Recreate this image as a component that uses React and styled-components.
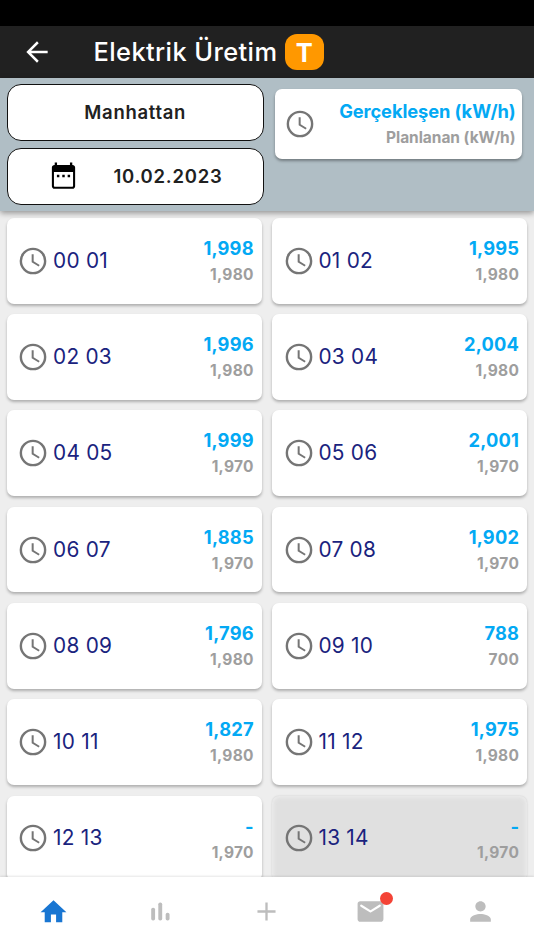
import React from "react";
import styled, { createGlobalStyle } from "styled-components";

const GlobalStyle = createGlobalStyle`
    * {
        box-sizing: border-box;
    }
    body {
        margin: 0;
        overflow: hidden;
        font-family: Inter, Roboto, "Liberation Sans", sans-serif;
    }
`
const Screen = styled.div`
    width: 534px;
    height: 950px;
    display: flex;
    flex-direction: column;
    background: #eeeeee;
    overflow: hidden;
`
const StatusBar = styled.div`
    flex: 0 0 26px;
    background: #000;
`
const AppBar = styled.header`
    flex: 0 0 52px;
    display: flex;
    align-items: center;
    padding-left: 20.5px;
    background: #212121;
`
const Title = styled.h1`
    margin: 0 0 0 41px;
    width: 191.3px;
    font-size: 25.4px;
    font-weight: 500;
    line-height: 30px;
    letter-spacing: 0.42px;
    color: #fff;
    white-space: nowrap;
`
const Tag = styled.span`
    width: 39px;
    height: 36.5px;
    border-radius: 12px;
    display: flex;
    align-items: center;
    justify-content: center;
    background: #ff9800;
    color: #fff;
    font-size: 25.5px;
    font-weight: 700;
`
const Filters = styled.section`
    position: relative;
    z-index: 1;
    flex: 0 0 133px;
    display: flex;
    align-items: flex-start;
    padding: 6px 12px 0 6.5px;
    background: #b0bec5;
    box-shadow: 0 2px 6px rgba(0, 0, 0, 0.4);
`
const FilterButtons = styled.div`
    width: 257.5px;
    display: flex;
    flex-direction: column;
    gap: 6.5px;
`
const FilterButton = styled.button`
    height: 57.3px;
    padding: 0 0 1px;
    display: flex;
    align-items: center;
    justify-content: center;
    gap: 34.5px;
    border: 1.4px solid #111;
    border-radius: 14px;
    background: #fff;
    color: #212121;
    font-family: inherit;
    font-size: 18.5px;
    font-weight: 600;
    letter-spacing: ${(props) => props.$spacing};
`
const Legend = styled.div`
    flex: 1;
    height: 70px;
    margin: 5.3px 0 0 11.3px;
    padding: 0 6.5px 0 9px;
    display: flex;
    align-items: center;
    justify-content: space-between;
    border-radius: 7px;
    background: #fff;
    box-shadow: 0 2px 3px rgba(0, 0, 0, 0.35);
`
const Values = styled.div`
    display: flex;
    flex-direction: column;
    align-items: flex-end;
    padding-top: 1.2px;
    white-space: nowrap;
`
const Actual = styled.span`
    font-size: 18.3px;
    line-height: 27px;
    font-weight: ${(props) => props.$weight || 700};
    letter-spacing: ${(props) => props.$spacing || "0.2px"};
    color: #03a9f4;
`
const Planned = styled.span`
    font-size: 15.5px;
    line-height: 26px;
    font-weight: 700;
    letter-spacing: ${(props) => props.$spacing || "0.3px"};
    color: #9e9e9e;
`
const HourGrid = styled.main`
    flex: 1 1 0;
    min-height: 0;
    display: grid;
    grid-template-columns: 255px 255px;
    grid-auto-rows: 85.7px;
    gap: 10.6px 10.4px;
    padding: 6.9px 6.8px 0;
    overflow: hidden;
`
const HourCard = styled.article`
    display: flex;
    align-items: center;
    padding: 0 8px 0 10.7px;
    border-radius: 7px;
    background: ${(props) => (props.$disabled ? "#e0e0e0" : "#fff")};
    box-shadow: ${(props) => (props.$disabled
        ? "inset 0 0 4px 1px #eeeeee, 0 0 2px rgba(0, 0, 0, 0.15)"
        : "0 2px 3px rgba(0, 0, 0, 0.27)")};
`
const HourLabel = styled.span`
    flex: 1;
    margin-left: 3.6px;
    padding-bottom: 1px;
    font-size: 20.8px;
    letter-spacing: 0.25px;
    color: #1a237e;
`
const BottomNav = styled.nav`
    position: relative;
    z-index: 1;
    flex: 0 0 73px;
    display: grid;
    grid-template-columns: repeat(5, 1fr);
    justify-items: center;
    align-items: start;
    padding-top: 19px;
    background: #fff;
    box-shadow: 0 -1px 2px rgba(0, 0, 0, 0.1);
`
const NavItem = styled.a`
    position: relative;
    display: flex;
    padding-right: ${(props) => (props.$badge ? "7px" : 0)};
    color: ${(props) => (props.$active ? "#1976d2" : "#bdbdbd")};
`
const Badge = styled.i`
    position: absolute;
    top: -4px;
    right: 0;
    width: 13px;
    height: 13px;
    border-radius: 50%;
    background: #f44336;
`
const Svg = styled.svg`
    flex: none;
    display: block;
    fill: currentColor;
    color: ${(props) => props.$color || "inherit"};
`

const Icon = ({ size, color, children }) => (
    <Svg width={size} height={size} viewBox="0 0 24 24" $color={color}>
        {children}
    </Svg>
)

const ClockIcon = () => (
    <Icon size={32} color="#757575">
        <path d="M12 2a10 10 0 1 0 0 20 10 10 0 0 0 0-20zm0 18.2a8.2 8.2 0 1 1 0-16.4 8.2 8.2 0 0 1 0 16.4z" />
        <path d="M12.5 7H11v6l5.250 3.150.75-1.230-4.500-2.670z" />
    </Icon>
)

const CalendarIcon = () => (
    <Icon size={31} color="#000">
        <path d="M19 3.800h-.2V2h-1.800v1.800H7V2H5.200v1.800H5c-1.100 0-2 .9-2 2V20.300c0 1.100.9 2 2 2h14c1.100 0 2-.9 2-2V5.800c0-1.100-.9-2-2-2zm.4 16.300a.6.6 0 0 1-.6.600H5.200a.6.6 0 0 1-.6-.6V9.200h14.800z" />
        <path d="M6.900 11.500h1.900v1.900h-1.900zM11.050 11.500h1.900v1.900h-1.900zM15.200 11.500h1.900v1.900h-1.900z" />
    </Icon>
)

const hours = [
    { label: "00 01", actual: "1,998", planned: "1,980" },
    { label: "01 02", actual: "1,995", planned: "1,980" },
    { label: "02 03", actual: "1,996", planned: "1,980" },
    { label: "03 04", actual: "2,004", planned: "1,980" },
    { label: "04 05", actual: "1,999", planned: "1,970" },
    { label: "05 06", actual: "2,001", planned: "1,970" },
    { label: "06 07", actual: "1,885", planned: "1,970" },
    { label: "07 08", actual: "1,902", planned: "1,970" },
    { label: "08 09", actual: "1,796", planned: "1,980" },
    { label: "09 10", actual: "788", planned: "700" },
    { label: "10 11", actual: "1,827", planned: "1,980" },
    { label: "11 12", actual: "1,975", planned: "1,980" },
    { label: "12 13", actual: "-", planned: "1,970" },
    { label: "13 14", actual: "-", planned: "1,970", disabled: true },
]

const App = () => {
    return (
        <Screen>
            <GlobalStyle />
            <StatusBar />
            <AppBar>
                <Icon size={32} color="#fff">
                    <path d="M20 11.100H7.600l5.690-5.690L12 4l-8 8 8 8 1.290-1.410L7.600 12.900H20z" />
                </Icon>
                <Title>Elektrik Üretim</Title>
                <Tag>T</Tag>
            </AppBar>
            <Filters>
                <FilterButtons>
                    <FilterButton $spacing="0.7px">Manhattan</FilterButton>
                    <FilterButton $spacing="0.75px">
                        <CalendarIcon />
                        10.02.2023
                    </FilterButton>
                </FilterButtons>
                <Legend>
                    <ClockIcon />
                    <Values>
                        <Actual $weight={700} $spacing="-0.1px">Gerçekleşen (kW/h)</Actual>
                        <Planned $spacing="-0.05px">Planlanan (kW/h)</Planned>
                    </Values>
                </Legend>
            </Filters>
            <HourGrid>
                {hours.map((hour) => (
                    <HourCard key={hour.label} $disabled={hour.disabled}>
                        <ClockIcon />
                        <HourLabel>{hour.label}</HourLabel>
                        <Values>
                            <Actual>{hour.actual}</Actual>
                            <Planned>{hour.planned}</Planned>
                        </Values>
                    </HourCard>
                ))}
            </HourGrid>
            <BottomNav>
                <NavItem $active>
                    <Icon size={31}>
                        <path d="M10 20.300v-6h4v6h4.800v-7.800H22L12 3.300 2 12.500h3.200v7.800z" />
                    </Icon>
                </NavItem>
                <NavItem>
                    <Icon size={31}>
                        <rect x="4.800" y="9" width="3" height="10" rx="1.400" />
                        <rect x="10.300" y="5" width="3" height="14" rx="1.400" />
                        <rect x="16" y="13" width="3" height="6" rx="1.400" />
                    </Icon>
                </NavItem>
                <NavItem>
                    <Icon size={31}>
                        <path d="M19 12.900h-6.100V19h-1.800v-6.100H5v-1.800h6.100V5h1.800v6.100H19z" />
                    </Icon>
                </NavItem>
                <NavItem $badge>
                    <Icon size={31}>
                        <path d="M20 4H4c-1.100 0-1.990.9-1.990 2L2 18c0 1.100.9 2 2 2h16c1.100 0 2-.9 2-2V6c0-1.100-.9-2-2-2zm-.4 4.250l-7.070 4.420c-.32.2-.74.2-1.060 0L4.400 8.250a.85.85 0 1 1 .9-1.440L12 11l6.700-4.190a.85.85 0 1 1 .9 1.440z" />
                    </Icon>
                    <Badge />
                </NavItem>
                <NavItem>
                    <Icon size={31}>
                        <path d="M12 12c2.210 0 4-1.790 4-4s-1.790-4-4-4-4 1.790-4 4 1.790 4 4 4zm0 2c-2.670 0-8 1.340-8 4v2h16v-2c0-2.660-5.330-4-8-4z" />
                    </Icon>
                </NavItem>
            </BottomNav>
        </Screen>
    )
}

export default App
